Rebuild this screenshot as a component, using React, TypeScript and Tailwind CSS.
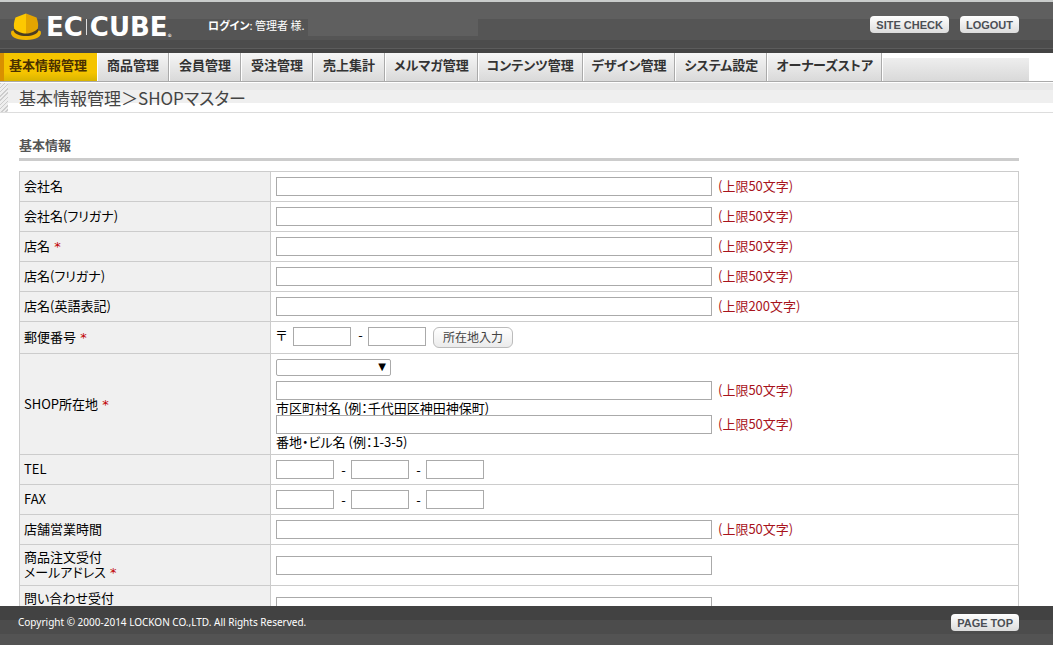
import type { ReactNode } from "react";

const navItems = [
  { label: "基本情報管理", active: true },
  { label: "商品管理" },
  { label: "会員管理" },
  { label: "受注管理" },
  { label: "売上集計" },
  { label: "メルマガ管理", wide: true },
  { label: "コンテンツ管理", wide: true },
  { label: "デザイン管理", wide: true },
  { label: "システム設定", wide: true },
  { label: "オーナーズストア", wide: true },
];

function LogoMark() {
  return (
    <svg className="h-7 w-8" viewBox="0 0 32 28" aria-hidden="true">
      <path
        d="M1.2 18.5C0 23 5 27 16 27S32 23 30.8 18.5C30 17.300 28 17.300 26 18L6 18C4 17.300 2 17.300 1.200 18.500Z"
        fill="#f0b400"
      />
      <path d="M3.500 17C4.500 25 27.500 25 28.500 17L26 14H6Z" fill="#4a3c22" />
      <path d="M16 0.500L5.500 4.500C3.800 9 3.500 12 4.200 15.500C7 19 12 20.500 16 20.500Z" fill="#fdc800" />
      <path d="M16 0.500L26.500 4.500C28.200 9 28.500 12 27.800 15.500C25 19 20 20.500 16 20.500Z" fill="#e3a400" />
    </svg>
  );
}

function HeaderButton({ children }: { children: ReactNode }) {
  return (
    <button
      type="button"
      className="h-[17px] rounded-sm bg-linear-to-b from-white to-[#dcdcdc] px-[6px] font-[Liberation_Sans,sans-serif] text-[11px] leading-4 font-bold text-[#4b4f55]"
    >
      {children}
    </button>
  );
}

function TextField({ id, label }: { id: string; label?: string }) {
  return (
    <input
      id={id}
      type="text"
      aria-label={label}
      className="block h-[19px] w-[436px] border border-[#aaa] bg-white px-1"
    />
  );
}

function SmallField({ id, label }: { id: string; label?: string }) {
  return (
    <input
      id={id}
      type="text"
      aria-label={label}
      className="block h-[19px] w-[58px] border border-[#aaa] bg-white px-1"
    />
  );
}

function Dash() {
  return <span className="w-[17px] pl-[2px] text-center">-</span>;
}

function Limit({ count }: { count: number }) {
  return <span className="pb-[2px] text-[#a8141c]">(上限{count}文字)</span>;
}

function Row({
  id,
  label,
  required = false,
  children,
}: {
  id: string;
  label: ReactNode;
  required?: boolean;
  children: ReactNode;
}) {
  return (
    <tr>
      <th
        scope="row"
        className="border border-[#ccc] bg-[#f0f0f0] px-1 pt-1 pb-[6px] text-left font-normal"
      >
        <label htmlFor={id}>
          {label}
          {required ? (
            <span className="font-[DejaVu_Sans,sans-serif] leading-none text-[#c00000]"> *</span>
          ) : null}
        </label>
      </th>
      <td className="border border-[#ccc] p-[5px]">{children}</td>
    </tr>
  );
}

function LimitedField({ id, label, count }: { id: string; label?: string; count: number }) {
  return (
    <div className="flex items-center gap-[6px]">
      <TextField id={id} label={label} />
      <Limit count={count} />
    </div>
  );
}

function PhoneFields({ id, name }: { id: string; name: string }) {
  return (
    <div className="flex items-center">
      <SmallField id={id} />
      <Dash />
      <SmallField id={`${id}2`} label={`${name} 2`} />
      <Dash />
      <SmallField id={`${id}3`} label={`${name} 3`} />
    </div>
  );
}

function Header() {
  return (
    <header className="flex h-[53px] shrink-0 items-start border-t-2 border-[#c9cccb] bg-[linear-gradient(#5f5f5f_17px,#555_17px_38px,#4c4c4c_38px_46px,#5c5c5c_46px_47px,#444_47px)] pr-[34px] pl-[10px] text-white">
      <a href="#" aria-label="EC-CUBE" className="flex w-[174px] items-center pt-[11px]">
        <LogoMark />
        <span className="ml-1 flex items-center font-[DejaVu_Sans,sans-serif] text-[26px] leading-7 font-bold">
          EC
          <span className="mx-[3px] h-4 w-px bg-[#ddd]" />
          CUBE
        </span>
        <span className="self-end text-[8px] leading-2">®</span>
      </a>
      <p className="mt-[15px] ml-6 w-[92px] text-[11px] leading-4 whitespace-nowrap">
        <span className="font-bold">ログイン</span>: 管理者 様.
      </p>
      <span className="mt-[17px] ml-2 h-[17px] w-[170px] bg-[#5f5f5f]" />
      <div className="mt-[14px] ml-auto flex gap-[11px]">
        <HeaderButton>SITE CHECK</HeaderButton>
        <HeaderButton>LOGOUT</HeaderButton>
      </div>
    </header>
  );
}

function navClass(item: { active?: boolean; wide?: boolean }) {
  if (item.active) {
    return "border-l-4 border-[#d99000] bg-linear-to-b from-[#f5c400] from-70% to-[#d8b400] pr-[10px] pl-[5px] leading-6 font-bold text-[#4a3000]";
  }
  const common =
    "border-r border-l border-r-[#aaa] border-l-white bg-linear-to-b from-[#f6f6f6] to-[#d9d9d9] leading-6 font-bold text-[#333]";
  return item.wide ? `${common} px-2` : `${common} px-[9px]`;
}

function Navigation() {
  return (
    <nav className="flex h-[29px] shrink-0 border-b border-[#aaa] pr-6">
      <ul className="flex">
        {navItems.map((item) => (
          <li key={item.label} className="flex">
            <a href="#" className={navClass(item)}>
              {item.label}
            </a>
          </li>
        ))}
      </ul>
      <div className="mt-[5px] ml-px flex-1 bg-linear-to-b from-[#eee] to-[#d9d9d9]" />
    </nav>
  );
}

function Footer() {
  return (
    <footer className="flex h-[39px] shrink-0 items-start justify-between bg-[linear-gradient(#424242_14px,#4c4c4c_14px_28px,#535353_28px)] pt-2 pr-[34px] pl-[18px] text-white">
      <p className="font-[Noto_Sans,sans-serif] text-[10px] leading-4">
        Copyright © 2000-2014 LOCKON CO.,LTD. All Rights Reserved.
      </p>
      <HeaderButton>PAGE TOP</HeaderButton>
    </footer>
  );
}

export default function App() {
  return (
    <div className="flex h-screen flex-col bg-white font-['Noto_Sans_CJK_JP',sans-serif] text-[13px] leading-[15px] text-black [font-feature-settings:'palt']">
      <Header />
      <Navigation />
      <div className="mt-px flex h-[30px] shrink-0 border-b border-[#ddd] bg-[linear-gradient(#e8e8e8_7px,#efefef_7px_20px,#fff_20px)]">
        <div className="w-2 bg-[repeating-linear-gradient(135deg,#ccc_0_1px,#eee_1px_3px)]" />
        <h1 className="pl-[11px] text-[17px] leading-[30px] text-[#444]">基本情報管理＞SHOPマスター</h1>
      </div>

      <main className="min-h-0 flex-1 overflow-y-auto pr-[34px] pl-[19px] [scrollbar-width:none]">
        <h2 className="mt-6 border-b-3 border-[#ccc] pb-[6px] font-bold text-[#555]">基本情報</h2>
        <table className="mt-[10px] w-full border-collapse">
          <colgroup>
            <col className="w-[251px]" />
            <col />
          </colgroup>
          <tbody>
            <Row id="company" label="会社名">
              <LimitedField id="company" count={50} />
            </Row>
            <Row id="company-kana" label="会社名(フリガナ)">
              <LimitedField id="company-kana" count={50} />
            </Row>
            <Row id="shop" label="店名" required>
              <LimitedField id="shop" count={50} />
            </Row>
            <Row id="shop-kana" label="店名(フリガナ)">
              <LimitedField id="shop-kana" count={50} />
            </Row>
            <Row id="shop-eng" label="店名(英語表記)">
              <LimitedField id="shop-eng" count={200} />
            </Row>
            <Row id="zip" label="郵便番号" required>
              <div className="flex items-start">
                <span className="w-[17px]">〒</span>
                <SmallField id="zip" />
                <Dash />
                <SmallField id="zip2" label="郵便番号 2" />
                <button
                  type="button"
                  className="ml-[7px] h-[21px] rounded-md border border-[#bbb] bg-linear-to-b from-white to-[#ebebeb] px-[9px] pb-[2px] text-xs leading-4 text-[#444]"
                >
                  所在地入力
                </button>
              </div>
            </Row>
            <Row id="pref" label="SHOP所在地" required>
              <div className="relative mb-[5px] w-[115px]">
                <select
                  id="pref"
                  className="block h-[17px] w-full appearance-none rounded-xs border border-[#aaa] bg-white"
                >
                  <option></option>
                </select>
                <span className="pointer-events-none absolute top-0 right-[5px] font-[DejaVu_Sans,sans-serif] text-[10px] leading-4">
                  ▼
                </span>
              </div>
              <LimitedField id="addr1" label="市区町村名" count={50} />
              <p>市区町村名 (例：千代田区神田神保町)</p>
              <LimitedField id="addr2" label="番地・ビル名" count={50} />
              <p>番地・ビル名 (例：1-3-5)</p>
            </Row>
            <Row id="tel" label="TEL">
              <PhoneFields id="tel" name="TEL" />
            </Row>
            <Row id="fax" label="FAX">
              <PhoneFields id="fax" name="FAX" />
            </Row>
            <Row id="hours" label="店舗営業時間">
              <LimitedField id="hours" count={50} />
            </Row>
            <Row
              id="email-order"
              label={
                <>
                  商品注文受付
                  <br />
                  メールアドレス
                </>
              }
              required
            >
              <TextField id="email-order" />
            </Row>
            <Row
              id="email-contact"
              label={
                <>
                  問い合わせ受付
                  <br />
                  &nbsp;
                </>
              }
            >
              <TextField id="email-contact" />
            </Row>
          </tbody>
        </table>
      </main>

      <Footer />
    </div>
  );
}
